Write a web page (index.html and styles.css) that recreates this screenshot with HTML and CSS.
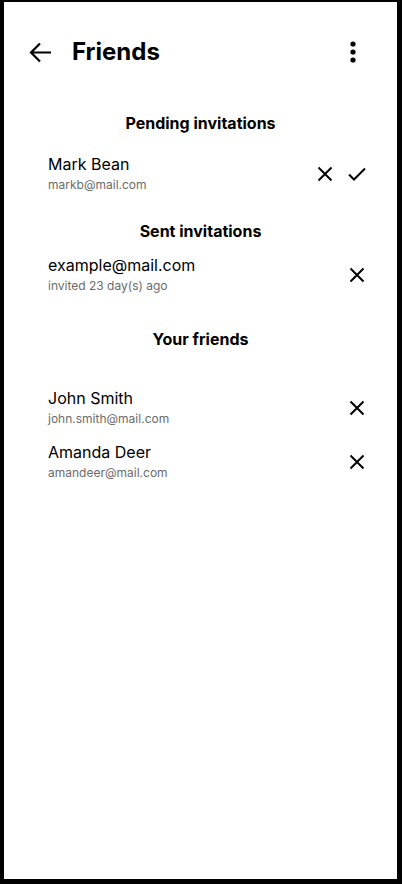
FILE: index.html
```html
<!DOCTYPE html>
<html lang="en">
<head>
<meta charset="utf-8">
<title>Friends</title>
<link rel="stylesheet" href="styles.css">
</head>
<body>
<div class="screen">
  <header class="appbar">
    <button class="icon-btn back" aria-label="Back">
      <svg width="23" height="21" viewBox="0 0 23 21"><path d="M22 10.5H2M11 1.5L2 10.5L11 19.5" fill="none" stroke="#000" stroke-width="2.2" stroke-linecap="butt" stroke-linejoin="miter"/></svg>
    </button>
    <h1 class="title">Friends</h1>
    <button class="icon-btn more" aria-label="More">
      <svg width="8" height="22" viewBox="0 0 8 22"><circle cx="4" cy="3" r="2.6" fill="#000"/><circle cx="4" cy="11" r="2.6" fill="#000"/><circle cx="4" cy="19" r="2.6" fill="#000"/></svg>
    </button>
  </header>

  <h2 class="section-title pending">Pending invitations</h2>
  <ul class="list list-pending">
    <li class="row">
      <div class="info"><div class="name">Mark Bean</div><div class="sub">markb@mail.com</div></div>
      <div class="actions">
        <span class="icon"><svg width="24" height="24" viewBox="0 0 24 24"><path d="M5.5 5.5L18.5 18.5M18.5 5.5L5.5 18.5" fill="none" stroke="#000" stroke-width="2"/></svg></span>
        <span class="icon"><svg width="24" height="24" viewBox="0 0 24 24"><path d="M4 12.5L9 17.5L20 6.5" fill="none" stroke="#000" stroke-width="2"/></svg></span>
      </div>
    </li>
  </ul>

  <h2 class="section-title sent">Sent invitations</h2>
  <ul class="list list-sent">
    <li class="row">
      <div class="info"><div class="name">example@mail.com</div><div class="sub">invited 23 day(s) ago</div></div>
      <div class="actions">
        <span class="icon"><svg width="24" height="24" viewBox="0 0 24 24"><path d="M5.5 5.5L18.5 18.5M18.5 5.5L5.5 18.5" fill="none" stroke="#000" stroke-width="2"/></svg></span>
      </div>
    </li>
  </ul>

  <h2 class="section-title friends">Your friends</h2>
  <ul class="list list-friends">
    <li class="row">
      <div class="info"><div class="name">John Smith</div><div class="sub">john.smith@mail.com</div></div>
      <div class="actions">
        <span class="icon"><svg width="24" height="24" viewBox="0 0 24 24"><path d="M5.5 5.5L18.5 18.5M18.5 5.5L5.5 18.5" fill="none" stroke="#000" stroke-width="2"/></svg></span>
      </div>
    </li>
    <li class="row">
      <div class="info"><div class="name">Amanda Deer</div><div class="sub">amandeer@mail.com</div></div>
      <div class="actions">
        <span class="icon"><svg width="24" height="24" viewBox="0 0 24 24"><path d="M5.5 5.5L18.5 18.5M18.5 5.5L5.5 18.5" fill="none" stroke="#000" stroke-width="2"/></svg></span>
      </div>
    </li>
  </ul>
</div>
</body>
</html>
```

FILE: styles.css
```css
* { box-sizing: border-box; }
html, body {
  margin: 0;
  padding: 0;
  background: #000;
}
body {
  font-family: Inter, "Noto Sans", "Liberation Sans", sans-serif;
  color: #000;
}
.screen {
  width: 402px;
  height: 884px;
  background: #fff;
  border-style: solid;
  border-color: #000;
  border-width: 2px 5px 5px 4px;
  display: flex;
  flex-direction: column;
}
.appbar {
  display: flex;
  align-items: center;
  height: 48px;
  margin-top: 26px;
  padding: 0 40px 0 25px;
}
.icon-btn {
  border: 0;
  background: none;
  padding: 0;
  display: flex;
  align-items: center;
  justify-content: center;
}
.back { width: 23px; height: 21px; }
.more { width: 8px; height: 22px; margin-left: auto; }
.title {
  margin: 0 0 0 20px;
  font-size: 24px;
  font-weight: 700;
  line-height: 28px;
}
.section-title {
  margin: 0;
  text-align: center;
  font-size: 16px;
  font-weight: 700;
  line-height: 20px;
}
.pending { margin-top: 37px; }
.sent { margin-top: 28px; }
.friends { margin-top: 35px; }
.list {
  list-style: none;
  margin: 0;
  padding: 0 28px 0 44px;
  display: flex;
  flex-direction: column;
  gap: 15px;
}
.list-pending { margin-top: 21px; }
.list-sent { margin-top: 14px; }
.list-friends { margin-top: 39px; }
.row {
  display: flex;
  align-items: center;
  justify-content: space-between;
}
.info {
  display: flex;
  flex-direction: column;
  gap: 3px;
}
.name {
  font-size: 16px;
  line-height: 20px;
}
.sub {
  font-size: 12px;
  line-height: 16px;
  color: #6b6b6b;
}
.actions {
  display: flex;
  gap: 8px;
}
.icon {
  width: 24px;
  height: 24px;
  display: flex;
}
```
